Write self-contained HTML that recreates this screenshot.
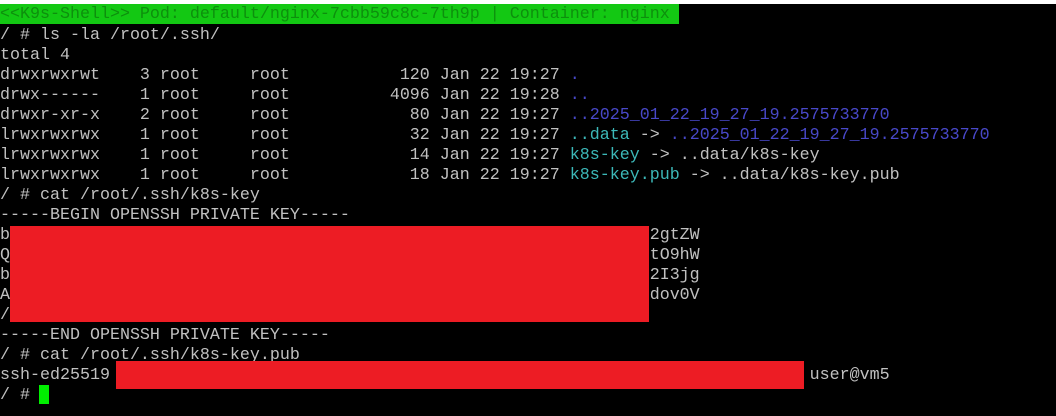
<!DOCTYPE html>
<html><head><meta charset="utf-8"><style>
html,body{margin:0;padding:0;background:#000;width:1056px;height:416px;overflow:hidden}
body{position:relative;font-family:"Liberation Mono",monospace;font-size:16.67px;color:#c0c0c0}
.top{position:absolute;left:0;top:0;width:1056px;height:4px;background:#fff}
.hdr{position:absolute;left:0;top:4px;width:679px;height:20px;background:#13c813;color:#0d8f0d;line-height:22px;white-space:pre;overflow:hidden}
pre{position:absolute;left:0;top:26px;margin:0;font:inherit;line-height:20px;white-space:pre}
.b{color:#4848c8}.c{color:#3cb8b8}
.r{position:absolute;background:#ed1c24}
.cur{position:absolute;left:39px;top:385px;width:10px;height:19px;background:#00ee00}
</style></head><body>
<div class="top"></div>
<div class="hdr">&lt;&lt;K9s-Shell&gt;&gt; Pod: default/nginx-7cbb59c8c-7th9p | Container: nginx</div>
<pre>/ # ls -la /root/.ssh/
total 4
drwxrwxrwt    3 root     root           120 Jan 22 19:27 <span class="b">.</span>
drwx------    1 root     root          4096 Jan 22 19:28 <span class="b">..</span>
drwxr-xr-x    2 root     root            80 Jan 22 19:27 <span class="b">..2025_01_22_19_27_19.2575733770</span>
lrwxrwxrwx    1 root     root            32 Jan 22 19:27 <span class="c">..data</span> -&gt; <span class="b">..2025_01_22_19_27_19.2575733770</span>
lrwxrwxrwx    1 root     root            14 Jan 22 19:27 <span class="c">k8s-key</span> -&gt; ..data/k8s-key
lrwxrwxrwx    1 root     root            18 Jan 22 19:27 <span class="c">k8s-key.pub</span> -&gt; ..data/k8s-key.pub
/ # cat /root/.ssh/k8s-key
-----BEGIN OPENSSH PRIVATE KEY-----
b                                                                2gtZW
Q                                                                tO9hW
b                                                                2I3jg
A                                                                dov0V
/
-----END OPENSSH PRIVATE KEY-----
/ # cat /root/.ssh/k8s-key.pub
ssh-ed25519                                                                      user@vm5
/ # </pre>
<div class="r" style="left:10px;top:226px;width:639px;height:96px"></div>
<div class="r" style="left:116px;top:361px;width:688px;height:28px"></div>
<div class="cur"></div>
</body></html>
